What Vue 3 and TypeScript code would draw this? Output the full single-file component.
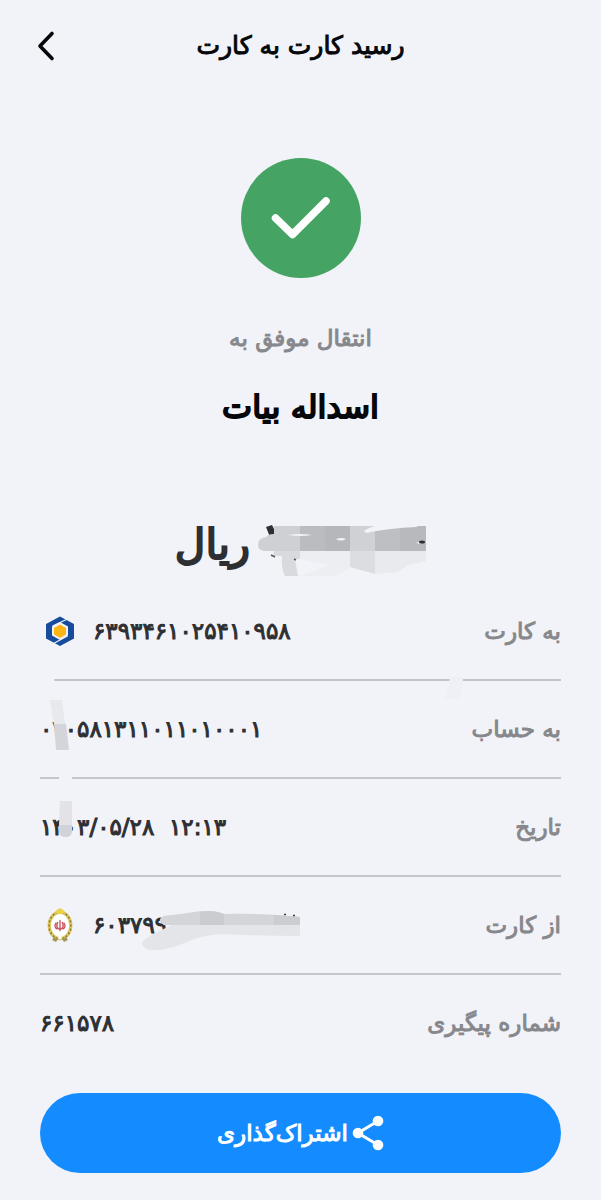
<script setup lang="ts">
interface ReceiptRow {
  id: string
  label: string
  value: string
  bank?: 'sepah' | 'melli'
}

const rows: ReceiptRow[] = [
  { id: 'to-card', label: 'به کارت', value: '۶۳۹۳۴۶۱۰۲۵۴۱۰۹۵۸', bank: 'sepah' },
  { id: 'to-account', label: 'به حساب', value: '۰۲۰۵۸۱۳۱۱۰۱۱۰۱۰۰۰۱' },
  { id: 'date', label: 'تاریخ', value: '۱۴۰۳/۰۵/۲۸  ۱۲:۱۳' },
  { id: 'from-card', label: 'از کارت', value: '۶۰۳۷۹۹', bank: 'melli' },
  { id: 'tracking', label: 'شماره پیگیری', value: '۶۶۱۵۷۸' },
]

const beads: number[] = Array.from({ length: 20 }, (_, i) => i * 18)
</script>

<template>
  <div class="page" dir="rtl" lang="fa">
    <header class="header">
      <h1 class="title">رسید کارت به کارت</h1>
      <button class="back" type="button" aria-label="بازگشت">
        <svg width="20" height="32" viewBox="0 0 20 32" fill="none">
          <path d="M16 3.500L4 16L16 28.500" stroke="#05070a" stroke-width="3.600" stroke-linecap="round" stroke-linejoin="round" />
        </svg>
      </button>
    </header>

    <main class="content">
      <section class="summary">
        <svg class="success" width="120" height="120" viewBox="0 0 120 120" fill="none">
          <circle cx="60" cy="60" r="60" fill="#45a463" />
          <path d="M34.500 60L51.500 76.500L85 43" stroke="#fff" stroke-width="7.500" stroke-linecap="round" stroke-linejoin="round" />
        </svg>
        <p class="caption">انتقال موفق به</p>
        <h2 class="name">اسداله بیات</h2>
        <p class="amount">
          <svg class="amount-mask" width="168" height="52" viewBox="0 0 168 52">
            <path d="M8 2L14 0L20 12H12Z" fill="#2d2f33" />
            <path d="M16 1H42V26H8Q0 26 0 20Q0 13 8 12Q10 9 16 9Z" fill="#cfd0d4" />
            <path d="M16 26H42V34H37L40 51H27Q23 44 24 31H15Z" fill="#d9dadd" />
            <path d="M42 1H92V26H42Z" fill="#bbbcc0" />
            <path d="M67 1H92V26H67Z" fill="#b6b7bb" />
            <path d="M92 1H117V26H92Z" fill="#d0d1d5" />
            <path d="M92 26H117V49L92 42Z" fill="#dcdde1" />
            <path d="M117 1H168V26H117Z" fill="#bebfc3" />
            <path d="M142 1H168V26H142Z" fill="#b8b9bd" />
            <path d="M117 26H168V36L150 40L140 47L117 49Z" fill="#e9eaee" />
            <path d="M42 26H92V42L78 51H40L55 47L70 40L42 34Z" fill="#eceef2" />
            <path d="M106 6Q111 2 121 0H162L158 2Q132 3 108 8Z M30 10Q42 8 54 10Q42 12 30 10Z M78 14Q84 12 88 14Q83 17 78 14Z M158 18L163 16V19Z" fill="#f2f3f8" />
            <ellipse cx="164" cy="17" rx="3" ry="1.500" fill="#2d2f33" />
            <path d="M13 30L17 32M36 34L38 35" stroke="#55575b" stroke-width="1.500" />
          </svg>
          <span>ریال</span>
        </p>
      </section>

      <dl class="rows">
        <div v-for="row in rows" :key="row.id" class="row">
          <dt class="label">{{ row.label }}</dt>
          <dd class="value" dir="ltr">
            <svg v-if="row.bank === 'sepah'" class="bank" width="40" height="40" viewBox="0 0 40 40">
              <path d="M20 5.500L34 13V27.500L20 35L6 27.500V13Z" fill="#174b9b" />
              <path d="M20 11L28 15.500V24.500L20 29L12 24.500V15.500Z" fill="#f2f3f8" />
              <path d="M12.500 15L26.500 8.500M27.500 25L13.500 32.500" stroke="#f2f3f8" stroke-width="1.200" />
              <path d="M20 13.500L26 17V23.500L20 27L14 23.500V17Z" fill="#fbb616" />
            </svg>
            <svg v-if="row.bank === 'melli'" class="bank" width="40" height="40" viewBox="0 0 40 40">
              <ellipse cx="20" cy="20.500" rx="9.500" ry="12" fill="#fff" />
              <ellipse cx="20" cy="20.500" rx="10.800" ry="13.200" fill="none" stroke="#d9c55a" stroke-width="3.200" />
              <g fill="#8d7b3a">
                <ellipse
                  v-for="angle in beads"
                  :key="angle"
                  :cx="20 + 11 * Math.cos((angle * Math.PI) / 180)"
                  :cy="20.5 + 13.4 * Math.sin((angle * Math.PI) / 180)"
                  rx="0.900"
                  ry="1.100"
                />
              </g>
              <path d="M15 7Q17 4 20 3Q23 4 25 7L23 9H17Z" fill="#ead34a" />
              <path d="M14 32L18 34L16 37L12 35ZM26 32L22 34L24 37L28 35Z" fill="#a5965b" />
              <path d="M18 33L20 31L22 33L20 35Z" fill="#fff" />
              <path d="M20 15.500V25.500M17.700 17.500Q15.500 22 19 24M22.300 17.500Q24.500 22 21 24M16 18Q13.500 22 17 24M24 18Q26.500 22 23 24" fill="none" stroke="#c64a58" stroke-width="1.300" stroke-linecap="round" />
            </svg>
            <span class="digits">{{ row.value }}</span>
            <svg v-if="row.id === 'from-card'" class="card-mask" width="160" height="42" viewBox="0 0 160 42">
              <path d="M22 5Q40 3 60 0Q76 0 82 3Q120 2 158 6V25Q118 25 80 23Q60 24 45 31Q22 41 7 39Q0 37 0 31Q4 26 30 14L22 14Q14 9 22 5Z" fill="#e4e5e9" />
              <path d="M22 5Q40 3 60 0Q76 0 82 3Q120 2 158 6V14H22Q14 9 22 5Z" fill="#d4d5d9" />
              <path d="M58 1Q68 -1 76 1L82 3V14H58Z" fill="#cbccd0" />
              <path d="M132 4L158 6V14H132Z" fill="#cccdd1" />
              <path d="M142 3.500H144M151 4.500H153" stroke="#3a3c40" stroke-width="1.500" />
            </svg>
          </dd>
          <svg v-if="row.id === 'to-account'" class="account-mask" width="40" height="76" viewBox="0 0 40 76">
            <path d="M0 0H14L21 26H10Q6 12 0 10Z" fill="#f2f3f8" />
            <path d="M10 21H22L25 46H14Z" fill="#e8e9ed" />
            <path d="M14 45H26L29 71H16Z" fill="#d4d5da" />
          </svg>
          <svg v-if="row.id === 'date'" class="date-mask" width="14" height="66" viewBox="0 0 14 66">
            <path d="M0 0H13V30H0Z" fill="#f2f3f8" />
            <path d="M1 26H13V50H0Z" fill="#e2e2e7" />
            <path d="M0 50H13V56Q13 62 7 62Q0 62 0 56Z" fill="#d2d3d8" />
          </svg>
          <svg v-if="row.id === 'to-account'" class="line-gap" width="18" height="24" viewBox="0 0 18 24">
            <path d="M5 0H18Q18 15 13 22H0Q4 10 5 0Z" fill="#eff0f5" />
          </svg>
        </div>
      </dl>

      <button class="share" type="button">
        <svg width="32" height="36" viewBox="0 0 32 36">
          <path d="M26 6L6 18L26 30" fill="none" stroke="#fff" stroke-width="3" />
          <circle cx="26" cy="6" r="5.300" fill="#fff" />
          <circle cx="6" cy="18" r="5.300" fill="#fff" />
          <circle cx="26" cy="30" r="5.300" fill="#fff" />
        </svg>
        <span>اشتراک‌گذاری</span>
      </button>
    </main>
  </div>
</template>

<style>
body {
  margin: 0;
  background: #f2f3f8;
}
</style>

<style scoped>
.page {
  box-sizing: border-box;
  min-height: 100vh;
  padding: 0 40px 24px;
  background: #f2f3f8;
  color: #2d2f33;
  font-family: "DejaVu Sans", sans-serif;
  -webkit-text-stroke: 1px currentColor;
  paint-order: stroke fill;
}

.header {
  display: grid;
  grid-template-columns: 40px 1fr 40px;
  align-items: center;
  height: 92px;
}

.title {
  grid-column: 2;
  margin: 0;
  text-align: center;
  color: #05070a;
  font-size: 25px;
  font-weight: 400;
  line-height: 40px;
}

.back {
  display: flex;
  justify-content: flex-end;
  padding: 0;
  border: 0;
  background: none;
}

.back svg {
  margin-left: -4px;
}

.summary {
  display: flex;
  flex-direction: column;
  align-items: center;
}

.success {
  margin-top: 66px;
}

.caption {
  margin: 40px 0 0;
  color: #87888c;
  font-size: 23px;
  line-height: 40px;
}

.name {
  margin: 25px 0 0;
  color: #05070a;
  font-size: 32px;
  font-weight: 400;
  line-height: 48px;
  -webkit-text-stroke-width: 2px;
}

.amount {
  display: flex;
  align-items: center;
  gap: 8px;
  margin: 82px 0 0;
  font-size: 42px;
  line-height: 56px;
  -webkit-text-stroke-width: 2px;
}

.amount-mask {
  margin-top: 12px;
}

.rows {
  margin: 6px 0 0;
}

.row {
  position: relative;
  display: flex;
  align-items: center;
  justify-content: space-between;
  height: 96px;
  border-bottom: 2px solid #c4c5ca;
}

.row:last-child {
  border-bottom: 0;
}

.label {
  color: #87888c;
  font-size: 23px;
}

.value {
  position: relative;
  display: flex;
  align-items: center;
  gap: 13px;
  margin: 0;
  font-size: 23px;
}

.digits {
  white-space: pre;
}

.card-mask {
  position: absolute;
  left: 102px;
  top: 6px;
}

.account-mask {
  position: absolute;
  left: 0;
  top: -2px;
}

.date-mask {
  position: absolute;
  left: 19px;
  top: -4px;
}

.line-gap {
  position: absolute;
  right: 98px;
  top: -4px;
}

.share {
  display: flex;
  align-items: center;
  justify-content: center;
  gap: 4px;
  width: 100%;
  height: 80px;
  margin-top: 22px;
  padding: 0;
  border: 0;
  border-radius: 40px;
  background: #148cff;
  color: #fff;
  font: 23px "DejaVu Sans", sans-serif;
  -webkit-text-stroke: 1px currentColor;
}
</style>
